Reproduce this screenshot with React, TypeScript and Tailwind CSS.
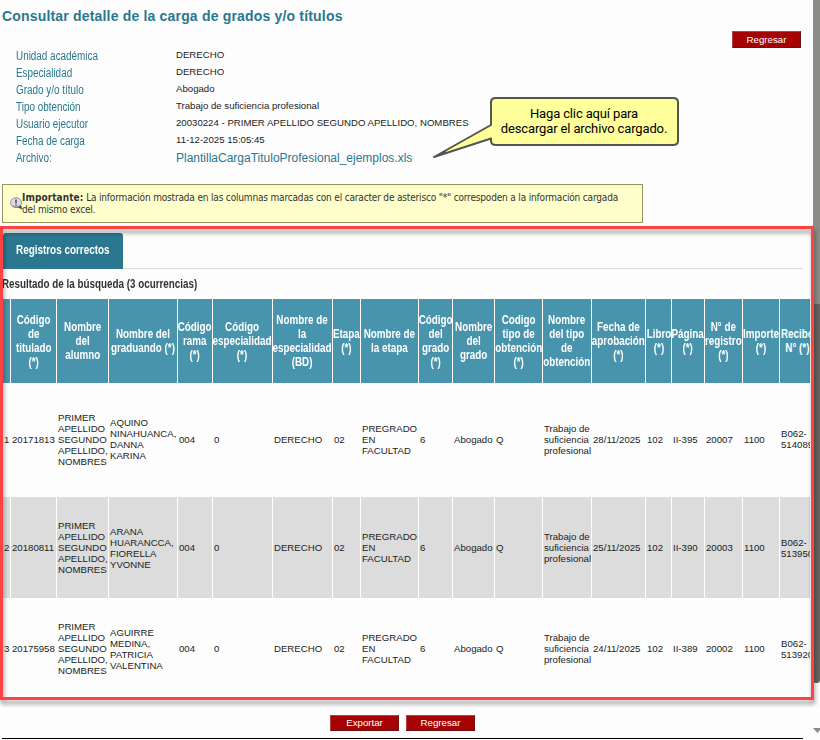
import React from "react";

type Field = { label: string; value: string; link?: boolean };

const fields: Field[] = [
  { label: "Unidad académica", value: "DERECHO" },
  { label: "Especialidad", value: "DERECHO" },
  { label: "Grado y/o título", value: "Abogado" },
  { label: "Tipo obtención", value: "Trabajo de suficiencia profesional" },
  { label: "Usuario ejecutor", value: "20030224 - PRIMER APELLIDO SEGUNDO APELLIDO, NOMBRES" },
  { label: "Fecha de carga", value: "11-12-2025 15:05:45" },
  { label: "Archivo:", value: "PlantillaCargaTituloProfesional_ejemplos.xls", link: true },
];

const headers: string[] = [
  "",
  "Código\nde\ntitulado\n(*)",
  "Nombre\ndel\nalumno",
  "Nombre del\ngraduando (*)",
  "Código\nrama\n(*)",
  "Código\nespecialidad\n(*)",
  "Nombre de\nla\nespecialidad\n(BD)",
  "Etapa\n(*)",
  "Nombre de\nla etapa",
  "Código\ndel\ngrado\n(*)",
  "Nombre\ndel\ngrado",
  "Codigo\ntipo de\nobtención\n(*)",
  "Nombre\ndel tipo\nde\nobtención",
  "Fecha de\naprobación\n(*)",
  "Libro\n(*)",
  "Página\n(*)",
  "N° de\nregistro\n(*)",
  "Importe\n(*)",
  "Recibo\nN° (*)",
];

const student = "PRIMER\nAPELLIDO\nSEGUNDO\nAPELLIDO,\nNOMBRES";
const mode = "Trabajo de\nsuficiencia\nprofesional";
const stage = "PREGRADO\nEN\nFACULTAD";

const rows: string[][] = [
  ["1", "20171813", student, "AQUINO\nNINAHUANCA,\nDANNA\nKARINA", "004", "0", "DERECHO", "02", stage, "6", "Abogado", "Q", mode, "28/11/2025", "102", "II-395", "20007", "1100", "B062-\n514089"],
  ["2", "20180811", student, "ARANA\nHUARANCCA,\nFIORELLA\nYVONNE", "004", "0", "DERECHO", "02", stage, "6", "Abogado", "Q", mode, "25/11/2025", "102", "II-390", "20003", "1100", "B062-\n513950"],
  ["3", "20175958", student, "AGUIRRE\nMEDINA,\nPATRICIA\nVALENTINA", "004", "0", "DERECHO", "02", stage, "6", "Abogado", "Q", mode, "24/11/2025", "102", "II-389", "20002", "1100", "B062-\n513920"],
];

const columns =
  "grid grid-cols-[8px_46px_52px_69px_35px_60px_60px_28px_58px_34px_42px_48px_49px_54px_26px_33px_38px_37px_31px]";

function RedButton({ children, className = "" }: { children: React.ReactNode; className?: string }) {
  return (
    <button
      className={`flex w-[69px] items-center justify-center border border-t-[#b84040] border-r-[#6e1010] border-b-[#6e1010] border-l-[#b84040] bg-[#a50303] text-[9.7px] leading-none text-white ${className}`}
    >
      {children}
    </button>
  );
}

function InfoIcon() {
  return (
    <svg width="13" height="13" viewBox="0 0 13 13" className="shrink-0">
      <path d="M7 10.2 L12.5 12.6 L10.8 7.5 Z" fill="#4a4a52" />
      <ellipse cx="6" cy="5.6" rx="5.4" ry="4.9" fill="#dcdce8" stroke="#8f8f9e" />
      <path d="M6 2.6 V6.4 M6 7.4 V8.7" stroke="#3d3d4c" strokeWidth="1.4" />
      <path d="M2.6 8.8 C4.5 10.6 7.5 10.6 9.6 8.6" fill="none" stroke="#6a6a7a" strokeWidth=".8" />
    </svg>
  );
}

function Callout() {
  return (
    <div className="absolute top-[96px] left-[432px] h-[64px] w-[249px]">
      <svg width="249" height="64" viewBox="0 0 249 64" className="absolute inset-0">
        <path
          d="M64 2 H241 Q246 2 246 6 V45 Q246 49 241 49 H64 Q59 49 59 45 V42.5 L2 61 L59 29 V6 Q59 2 64 2 Z"
          fill="#ffff9c"
          stroke="#55554f"
          strokeWidth="2"
          strokeLinejoin="round"
        />
        <path d="M2 61 L14 54.3 L14 57 Z" fill="#55554f" />
      </svg>
      <p className="relative ml-[55px] pt-[10px] text-center font-['Roboto',sans-serif] text-[13px] leading-[15px] tracking-[-0.14px] whitespace-pre text-black">
        {"Haga clic aquí para\ndescargar el archivo cargado."}
      </p>
    </div>
  );
}

export default function App() {
  return (
    <div className="relative flex h-[740px] w-[820px] overflow-hidden bg-[#fdfdfd] font-['Liberation_Sans',Arial,sans-serif] text-[#222]">
      <main className="flex w-[813px] shrink-0 flex-col overflow-hidden">
        <header className="h-[31px] shrink-0 pt-[8px] pl-[2px]">
          <h1 className="text-[14px] leading-4 font-bold tracking-[0.18px] text-[#2b7790]">
            Consultar detalle de la carga de grados y/o títulos
          </h1>
        </header>

        <section className="flex h-[153px] shrink-0 justify-between pr-[12px]">
          <dl className="pt-[15px] pl-[16px]">
            {fields.map((f) => (
              <div key={f.label} className="flex h-[17px]">
                <dt className="w-[160px] origin-left scale-x-[0.825] pt-[3px] text-[12px] leading-[15px] text-[#2b7790]">
                  {f.label}
                </dt>
                <dd
                  className={
                    f.link
                      ? "pt-[2px] text-[12px] leading-[17px] text-[#2b7790]"
                      : "text-[9.65px] leading-[17px] whitespace-nowrap"
                  }
                >
                  {f.value}
                </dd>
              </div>
            ))}
          </dl>
          <RedButton className="h-[17px]">Regresar</RedButton>
        </section>

        <aside className="ml-[2px] flex h-[39px] w-[641px] shrink-0 items-center border border-[#97955f] bg-[#ffffcb] pl-[7px]">
          <InfoIcon />
          <p className="-ml-px font-['DejaVu_Sans_Condensed','DejaVu_Sans',sans-serif] text-[10px] leading-[12px] tracking-[-0.17px] whitespace-pre text-[#333]">
            <b className="tracking-[0.08px]">Importante:</b>
            {' La información mostrada en las columnas marcadas con el caracter de asterisco "*" correspoden a la información cargada\ndel mismo excel.'}
          </p>
        </aside>

        <div className="mt-[10px] mr-[10px] ml-[3px] flex h-[36px] shrink-0 border-b border-[#dadada]">
          <div className="h-[36px] w-[120px] rounded-t-[3px] bg-[#2b7790] pt-[10px] pl-[13px] text-[12px] leading-[15px] font-bold text-white">
            <span className="inline-block origin-left scale-x-[0.825] whitespace-nowrap">Registros correctos</span>
          </div>
        </div>

        <h2 className="h-[30px] shrink-0 pt-[7px] pl-[2px] text-[12px] leading-[16px] font-bold text-[#333]">
          <span className="inline-block origin-left scale-x-[0.82] whitespace-nowrap">
            Resultado de la búsqueda (3 ocurrencias)
          </span>
        </h2>

        <div className="ml-[3px] w-[807px] shrink-0 overflow-hidden">
          <div className={`${columns} h-[84px] text-white`}>
            {headers.map((h, i) => (
              <div
                key={i}
                className={`flex items-center border-r border-white bg-[#4994ad] text-center text-[12px] leading-[14px] font-bold whitespace-pre ${i === headers.length - 1 ? "justify-start" : "justify-center"}`}
              >
                <span className={i === headers.length - 1 ? "origin-left translate-x-px scale-x-[0.82]" : "scale-x-[0.82]"}>
                  {h}
                </span>
              </div>
            ))}
          </div>
          {rows.map((r, ri) => (
            <div key={ri} className={`${columns} ${ri === 0 ? "h-[114px]" : "h-[101px]"}`}>
              {r.map((c, i) => (
                <div
                  key={i}
                  className={`flex items-center border-r border-white pl-px text-[9.65px] leading-[11px] whitespace-pre ${ri === 0 ? "pb-[2px]" : ""} ${ri === 1 ? "bg-[#dcdcdc]" : ""}`}
                >
                  {c}
                </div>
              ))}
            </div>
          ))}
        </div>

        <footer className="mr-[10px] ml-[2px] flex h-[40px] shrink-0 gap-[7px] border-b border-black pt-[16px] pl-[328px]">
          <RedButton className="h-[16px]">Exportar</RedButton>
          <RedButton className="h-[16px]">Regresar</RedButton>
        </footer>
      </main>

      <div className="flex w-[7px] flex-col">
        <div className="h-[304px] bg-[#8b8b89]" />
        <div className="h-[379px] rounded-b-[3px] bg-[#63625e]" />
        <svg width="7" height="6" viewBox="0 0 7 6" className="mt-[45px]">
          <path d="M0 0 H7 V2 L4.5 5 Z" fill="#8b8b89" />
        </svg>
      </div>

      <Callout />
      <div className="absolute top-[226px] left-0 h-[474px] w-[814px] border-[3px] border-[#ff4343] drop-shadow-[1px_4px_2px_rgba(0,0,0,0.4)]" />
    </div>
  );
}
